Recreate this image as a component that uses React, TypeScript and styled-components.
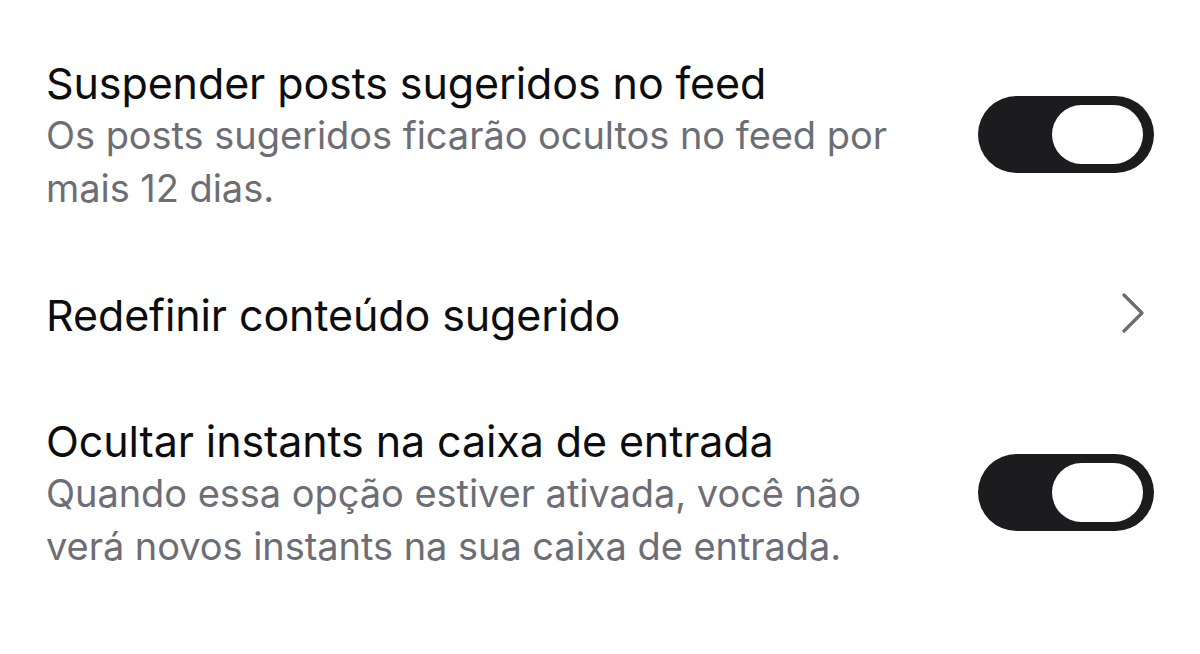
import styled, { createGlobalStyle } from 'styled-components';

const GlobalStyle = createGlobalStyle`
	html, body {
		margin: 0;
		padding: 0;
		background: #ffffff;
	}
	body {
		font-family: Inter, 'Noto Sans', 'Liberation Sans', sans-serif;
		-webkit-font-smoothing: antialiased;
	}
`;

const Page = styled.div`
	width: 1200px;
	min-height: 654px;
	box-sizing: border-box;
	padding: 20px 46px 40px 46px;
	display: flex;
	flex-direction: column;
	background: #ffffff;
`;

const Row = styled.div`
	display: flex;
	align-items: center;
	justify-content: space-between;
	padding: 37px 0;
	gap: 40px;
`;

const TextBlock = styled.div`
	display: flex;
	flex-direction: column;
	max-width: 880px;
`;

const Title = styled.div`
	font-size: 43px;
	line-height: 52px;
	color: #0d0d0f;
	letter-spacing: -0.1px;
`;

const Subtitle = styled.div`
	font-size: 38px;
	line-height: 53px;
	color: #6d6e75;
	letter-spacing: -0.05px;
	white-space: nowrap;
`;

const Track = styled.div<{ $on: boolean }>`
	flex: none;
	width: 176px;
	height: 77px;
	margin-top: -4px;
	border-radius: 39px;
	background: #1c1c1e;
	display: flex;
	align-items: center;
	justify-content: ${p => (p.$on ? 'flex-end' : 'flex-start')};
	padding: 0 11px;
	box-sizing: border-box;
`;

const Knob = styled.div`
	width: 91px;
	height: 59px;
	border-radius: 30px;
	background: #ffffff;
`;

const Chevron = styled.svg`
	flex: none;
	width: 24px;
	height: 40px;
	margin-right: 9px;
	margin-top: -5px;
`;

const Toggle = ({ on }: { on: boolean }) => (
	<Track $on={on} role="switch" aria-checked={on}>
		<Knob />
	</Track>
);

const settings = [
	{
		title: 'Suspender posts sugeridos no feed',
		lines: ['Os posts sugeridos ficarão ocultos no feed por', 'mais 12 dias.'],
		kind: 'toggle',
	},
	{
		title: 'Redefinir conteúdo sugerido',
		lines: [],
		kind: 'link',
	},
	{
		title: 'Ocultar instants na caixa de entrada',
		lines: [
			'Quando essa opção estiver ativada, você não',
			'verá novos instants na sua caixa de entrada.',
		],
		kind: 'toggle',
	},
];

export default function App() {
	return (
		<>
			<GlobalStyle />
			<Page>
				{settings.map(s => (
					<Row key={s.title}>
						<TextBlock>
							<Title>{s.title}</Title>
							{s.lines.map(l => (
								<Subtitle key={l}>{l}</Subtitle>
							))}
						</TextBlock>
						{s.kind === 'toggle' ? (
							<Toggle on />
						) : (
							<Chevron viewBox="0 0 24 40" fill="none">
								<path
									d="M3 2 L21 20 L3 38"
									stroke="#6b6b70"
									strokeWidth="3.2"
									strokeLinecap="round"
									strokeLinejoin="round"
								/>
							</Chevron>
						)}
					</Row>
				))}
			</Page>
		</>
	);
}
